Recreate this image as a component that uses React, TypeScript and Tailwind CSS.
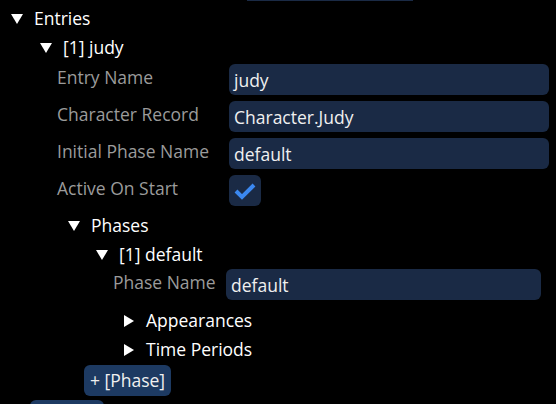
import React from "react";

const Down = ({ cls = "" }: { cls?: string }) => (
  <svg width="12" height="10" viewBox="0 0 12 10" className={cls}>
    <polygon points="0,0 12,0 6,10" fill="#ffffff" />
  </svg>
);
const Right = ({ cls = "" }: { cls?: string }) => (
  <svg width="10" height="12" viewBox="0 0 10 12" className={cls}>
    <polygon points="0,0 10,6 0,12" fill="#ffffff" />
  </svg>
);

const TreeRow = ({ indent, open, text }: { indent: string; open: boolean; text: string }) => (
  <div className={`flex items-center h-[29px] ${indent}`}>
    <div className="w-[23px] flex items-center">{open ? <Down /> : <Right cls="ml-[1px]" />}</div>
    <span className="text-white">{text}</span>
  </div>
);

export default function App() {
  return (
    <div
      className="w-[556px] h-[404px] bg-black overflow-hidden text-[17.5px]"
      style={{ fontFamily: '"Open Sans", "Noto Sans", sans-serif' }}
    >
      <div className="ml-[247px] w-[166px] h-[1px] bg-[#1a2a45]" />
      <div className="mt-[3px]">
        <TreeRow indent="pl-[11px]" open text="Entries" />
        <TreeRow indent="pl-[40px]" open text="[1] judy" />
      </div>
      <div className="mt-[2px] flex flex-col gap-[6px]">
        <div className="flex h-[31px]">
          <div className="w-[229px] pl-[57px] pt-[2px] leading-[22px] text-[#9b9b9b]">Entry Name</div>
          <div className="w-[320px] bg-[#1a2a45] rounded-[6px] h-[31px] pt-[1px] leading-[30px] pl-[5px] text-[#f0f0f0]">judy</div>
        </div>
        <div className="flex h-[31px]">
          <div className="w-[229px] pl-[57px] pt-[2px] leading-[22px] text-[#9b9b9b]">Character Record</div>
          <div className="w-[320px] bg-[#1a2a45] rounded-[6px] h-[31px] pt-[1px] leading-[30px] pl-[5px] text-[#f0f0f0]">Character.Judy</div>
        </div>
        <div className="flex h-[31px]">
          <div className="w-[229px] pl-[57px] pt-[2px] leading-[22px] text-[#9b9b9b]">Initial Phase Name</div>
          <div className="w-[320px] bg-[#1a2a45] rounded-[6px] h-[31px] pt-[1px] leading-[30px] pl-[5px] text-[#f0f0f0]">default</div>
        </div>
        <div className="flex h-[31px]">
          <div className="w-[229px] pl-[57px] pt-[2px] leading-[22px] text-[#9b9b9b]">Active On Start</div>
          <div className="w-[32px] h-[31px] bg-[#1a2a45] rounded-[6px] flex items-center justify-center">
            <svg width="22" height="18" viewBox="0 0 22 18">
              <polyline points="2,9 8,15 20,3" fill="none" stroke="#3b88f0" strokeWidth="4" strokeLinejoin="miter" strokeLinecap="butt" />
            </svg>
          </div>
        </div>
      </div>
      <div className="mt-[5px]">
        <TreeRow indent="pl-[68px]" open text="Phases" />
        <TreeRow indent="pl-[96px]" open text="[1] default" />
      </div>
      <div className="flex h-[31px]">
        <div className="w-[226px] pl-[113px] pt-[2px] leading-[22px] text-[#9b9b9b]">Phase Name</div>
        <div className="w-[315px] bg-[#1a2a45] rounded-[6px] h-[31px] pt-[1px] leading-[30px] pl-[5px] text-[#f0f0f0]">default</div>
      </div>
      <div className="mt-[6px]">
        <TreeRow indent="pl-[123px]" open={false} text="Appearances" />
        <TreeRow indent="pl-[123px]" open={false} text="Time Periods" />
      </div>
      <div className="mt-[1px] ml-[84px] w-[87px] h-[31px] rounded-[6px] bg-[#1d3a62] text-[#f0f0f0] leading-[31px] text-center">
        + [Phase]
      </div>
      <div className="mt-[4px] ml-[30px] w-[74px] h-[31px] rounded-[6px] bg-[#1d3a62]" />
    </div>
  );
}
